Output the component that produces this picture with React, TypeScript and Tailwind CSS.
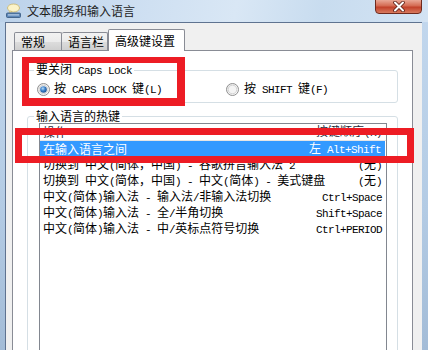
import React from 'react';

const mono = "font-['Liberation_Mono',monospace] text-[11px] tracking-[-0.6px]";

// Splits text into ASCII runs (narrow, SimSun-like) and CJK runs
const Mixed: React.FC<{ text: string }> = ({ text }) => {
  const parts = text.match(/[\x00-\x7f]+|[^\x00-\x7f]+/g) || [];
  return (
    <span className="whitespace-pre">
      {parts.map((p, i) =>
        /^[\x00-\x7f]+$/.test(p) ? (
          <span key={i} className={mono}>
            {p}
          </span>
        ) : (
          <span key={i}>{p}</span>
        )
      )}
    </span>
  );
};

const Radio: React.FC<{ checked?: boolean }> = ({ checked }) => (
  <svg width="13" height="13" viewBox="0 0 13 13" className="shrink-0">
    <defs>
      <linearGradient id="rb" x1="0" y1="0" x2="1" y2="1">
        <stop offset="0" stopColor="#e8e8e8" />
        <stop offset="1" stopColor="#ffffff" />
      </linearGradient>
      <radialGradient id="rd" cx="0.4" cy="0.35" r="0.7">
        <stop offset="0" stopColor="#b8dcf8" />
        <stop offset="0.5" stopColor="#3a7fc8" />
        <stop offset="1" stopColor="#1b4d8a" />
      </radialGradient>
    </defs>
    <circle cx="6.5" cy="6.5" r="6" fill="url(#rb)" stroke="#8f8f8f" />
    <circle cx="6.5" cy="6.5" r="4.3" fill="#f4f4f4" stroke="#c9c9c9" strokeWidth="0.8" />
    {checked && <circle cx="6.5" cy="6.5" r="3.3" fill="url(#rd)" />}
  </svg>
);

const Row: React.FC<{ left: string; right: string; selected?: boolean }> = ({ left, right, selected }) => (
  <div
    className={
      selected
        ? 'h-[16px] flex items-center justify-between pl-[3px] pr-[4px] mr-px bg-[#3399ff] text-white'
        : 'h-[16px] flex items-center justify-between pl-[3px] pr-[4px] text-black'
    }
  >
    <Mixed text={left} />
    <Mixed text={right} />
  </div>
);

const rows = [
  { left: '切换到 中文(简体，中国) - 谷歌拼音输入法 2', right: '(无)' },
  { left: '切换到 中文(简体，中国) - 中文(简体) - 美式键盘', right: '(无)' },
  { left: '中文(简体)输入法 - 输入法/非输入法切换', right: 'Ctrl+Space' },
  { left: '中文(简体)输入法 - 全/半角切换', right: 'Shift+Space' },
  { left: '中文(简体)输入法 - 中/英标点符号切换', right: 'Ctrl+PERIOD' },
];

export default function App() {
  return (
    <div className="relative w-[428px] h-[350px] overflow-hidden bg-[linear-gradient(180deg,#c3d8ee_0%,#b3cbe4_60%,#a3bcd7_100%)] font-['Noto_Sans_CJK_SC',sans-serif] text-[12px] leading-[16px] text-black">
      {/* title bar */}
      <div className="h-[22px] flex items-center pl-[5px] bg-[linear-gradient(100deg,#bcd2ea_0%,#cfe0f2_35%,#d9e7f5_55%,#c8dcef_75%,#d3e3f3_100%)]">
        <svg width="17" height="16" viewBox="0 0 17 16" className="shrink-0">
          <ellipse cx="8.5" cy="5" rx="6" ry="4" fill="#fbf3c8" stroke="#c9b56a" strokeWidth="0.8" />
          <path d="M5 8 L4 10 L7 8.5 Z" fill="#fbf3c8" stroke="#c9b56a" strokeWidth="0.6" />
          <rect x="1.5" y="10" width="14" height="4.5" rx="1" fill="#5d87b8" stroke="#34547c" strokeWidth="0.8" />
          <rect x="3" y="11.3" width="11" height="1.2" fill="#b8cde6" />
        </svg>
        <span className="ml-[5px] text-[12px] leading-[16px] text-[#1e1e1e]">文本服务和输入语言</span>
      </div>

      {/* close button */}
      <div className="absolute left-[375px] top-[-1px] w-[47px] h-[15px] rounded-b-[4px] border border-[#6e2a1e] bg-[linear-gradient(180deg,#e9a896_0%,#d46a52_45%,#c2412a_55%,#d87a5e_100%)] flex items-center justify-center">
        <svg width="14" height="11" viewBox="0 0 14 11">
          <path d="M3 1.5 L11 9.5 M11 1.5 L3 9.5" stroke="#5a1d14" strokeWidth="3.6" strokeLinecap="round" />
          <path d="M3 1.5 L11 9.5 M11 1.5 L3 9.5" stroke="#ffffff" strokeWidth="2" strokeLinecap="round" />
        </svg>
      </div>

      {/* client area */}
      <div className="ml-[5px] w-[417px] h-[330px] border-l border-t border-[#5f7390] bg-[#f0f0f0]">
        {/* tabs */}
        <div className="h-[27px] pt-[6px] pl-[8px] flex items-end">
          <div className="w-[48px] h-[18px] border border-b-0 border-[#898c95] rounded-t-[2px] bg-[linear-gradient(180deg,#f2f2f2_0%,#ebebeb_50%,#dddddd_51%,#cfcfcf_100%)] pl-[6px] leading-[18px]">
            常规
          </div>
          <div className="w-[46px] h-[18px] border border-b-0 border-l-0 border-[#898c95] rounded-t-[2px] bg-[linear-gradient(180deg,#f2f2f2_0%,#ebebeb_50%,#dddddd_51%,#cfcfcf_100%)] pl-[6px] leading-[18px]">
            语言栏
          </div>
          <div className="relative z-10 w-[77px] h-[22px] -mb-px border border-b-0 border-[#898c95] rounded-t-[2px] bg-white pl-[6px] leading-[22px]">
            高级键设置
          </div>
        </div>

        {/* tab panel */}
        <div className="ml-[6px] w-[401px] h-[320px] border border-[#898c95] bg-white pl-[14px] pt-[11px]">
          <fieldset className="w-[371px] border border-[#d5dfe5] rounded-[3px] pb-[5px]">
            <legend className="ml-[6px] px-[2px] leading-[14px]">
              <Mixed text="要关闭 Caps Lock" />
            </legend>
            <div className="mt-[3px] h-[16px] flex items-center pl-[9px]">
              <label className="w-[189px] flex items-center gap-[4px]">
                <Radio checked />
                <Mixed text="按 CAPS LOCK 键(L)" />
              </label>
              <label className="flex items-center gap-[5px]">
                <Radio />
                <Mixed text="按 SHIFT 键(F)" />
              </label>
            </div>
          </fieldset>

          <fieldset className="mt-[6px] w-[371px] h-[260px] border border-[#d5dfe5] rounded-[3px]">
            <legend className="ml-[6px] px-[2px] leading-[14px]">输入语言的热键</legend>
            <div className="ml-[11px] w-[348px] h-[240px] border border-[#828790] bg-white">
              <div className="h-[17px] flex items-center justify-between pl-[3px] pr-[4px] border-b border-[#e5e5e5] text-[#1e2a3a]">
                <span>操作</span>
                <Mixed text="按键顺序(K)" />
              </div>
              <Row left="在输入语言之间" right="左 Alt+Shift" selected />
              {rows.map((r) => (
                <Row key={r.left} left={r.left} right={r.right} />
              ))}
            </div>
          </fieldset>
        </div>
      </div>

      {/* red annotation boxes */}
      <div className="absolute left-[22px] top-[57px] w-[163px] h-[49px] border-[#ed1c24] border-l-[7px] border-t-[6px] border-r-[8px] border-b-[8px]" />
      <div className="absolute left-[15px] top-[128px] w-[399px] h-[35px] border-[7px] border-[#ed1c24]" />
    </div>
  );
}
